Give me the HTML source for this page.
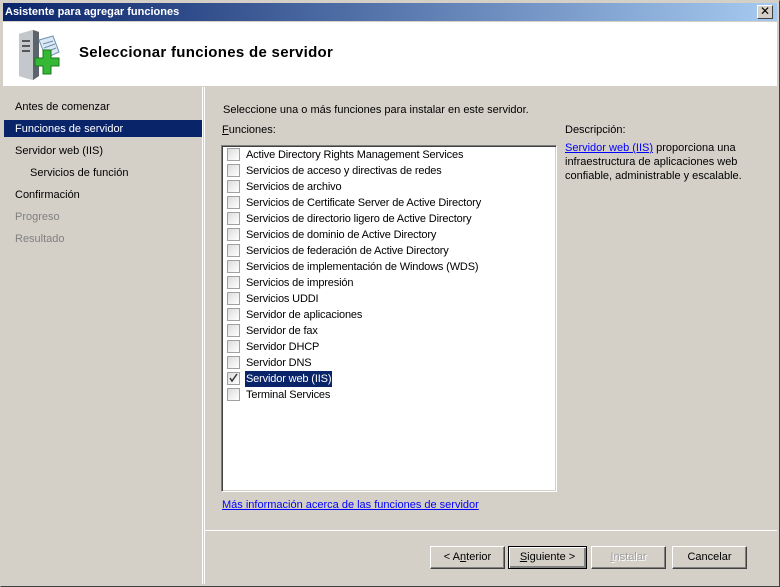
<!DOCTYPE html>
<html><head><meta charset="utf-8"><style>
*{margin:0;padding:0;box-sizing:border-box}
body{width:780px;height:587px;background:#d4d0c8;font-family:Tahoma,"Liberation Sans","DejaVu Sans",sans-serif;font-size:11px;color:#000;position:relative;overflow:hidden}
.abs{position:absolute}
#win{left:0;top:0;width:780px;height:587px;border:1px solid #d4d0c8;border-right-color:#404040;border-bottom-color:#404040}
#title{left:3px;top:3px;width:774px;height:18px;background:linear-gradient(90deg,#0a246a,#a6caf0);color:#fff;font-weight:bold;font-size:11px;line-height:18px;padding-left:2px}
#close{left:757px;top:5px;width:16px;height:14px;background:#d4d0c8;border:1px solid;border-color:#fff #404040 #404040 #fff;font-size:12px;line-height:11px;text-align:center;font-weight:bold;color:#000}
#head{left:3px;top:22px;width:774px;height:64px;background:#fff;border-bottom:1px solid #fff}
#head h1{position:absolute;left:76px;top:22px;font-size:15px;font-weight:bold;letter-spacing:0.3px}
#left{left:3px;top:87px;width:199px;height:497px;background:#d4d0c8}
#vl{left:202px;top:87px;width:3px;height:497px;border-left:1px solid #fff;border-right:1px solid #fff;background:#d4d0c8}
.nav{position:absolute;left:12px;height:17px;line-height:17px}
.sel{left:1px;width:201px;background:#0a246a;color:#fff;padding-left:11px}
.dis{color:#808080}
.lb{left:221px;top:145px;width:336px;height:347px;background:#fff;border:1px solid;border-color:#808080 #fff #fff #808080;box-shadow:inset 1px 1px 0 #404040,inset -1px -1px 0 #d4d0c8;letter-spacing:-0.15px}
.it{position:absolute;left:5px;height:16px;line-height:16px}
.cb{position:absolute;left:0;top:2px;width:13px;height:13px;border:1px solid #a0a0a0;background:linear-gradient(135deg,#dcdcdc,#fff)}
.tx{position:absolute;left:18px;top:1px;white-space:nowrap;padding:0 1px}
a{color:#0000ff;text-decoration:underline}
#bsep{left:205px;top:530px;width:572px;height:2px;border-top:1px solid #fff}
.btn{position:absolute;top:546px;width:75px;height:23px;border:1px solid;border-color:#fff #404040 #404040 #fff;box-shadow:inset -1px -1px 0 #808080;text-align:center;line-height:21px;background:#d4d0c8}
</style></head><body>
<div id="win" class="abs"></div>
<div id="title" class="abs">Asistente para agregar funciones</div>
<div id="close" class="abs">✕</div>
<div id="head" class="abs">
<svg style="position:absolute;left:10px;top:6px" width="50" height="54" viewBox="0 0 50 54">
<path d="M6 6 L20 2 L26 4 L26 48 L20 52 L6 48 Z" fill="#8a8f96"/>
<path d="M6 6 L20 2 L20 52 L6 48 Z" fill="#c4c8cd"/>
<path d="M20 2 L26 4 L26 48 L20 52Z" fill="#5d636b"/>
<rect x="9" y="12" width="8" height="2" fill="#555"/><rect x="9" y="17" width="8" height="2" fill="#555"/><rect x="9" y="22" width="8" height="2" fill="#555"/>
<path d="M26 12 L40 8 L46 24 L33 30 Z" fill="#dce8f3" stroke="#6a8fb0"/>
<path d="M30 16 L40 13 M31 20 L42 16 M33 24 L43 20" stroke="#6a8fb0"/>
<path d="M36 24 h8 v8 h8 v8 h-8 v8 h-8 v-8 h-8 v-8 h8z" transform="translate(-6,-2)" fill="#35b835" stroke="#1b7a1b"/>
</svg>
<h1>Seleccionar funciones de servidor</h1></div>
<div id="left" class="abs">
<div class="nav" style="top:12px">Antes de comenzar</div>
<div class="nav sel" style="top:33px;line-height:19px">Funciones de servidor</div>
<div class="nav" style="top:56px">Servidor web (IIS)</div>
<div class="nav" style="left:27px;top:78px">Servicios de función</div>
<div class="nav" style="top:100px">Confirmación</div>
<div class="nav dis" style="top:122px">Progreso</div>
<div class="nav dis" style="top:144px">Resultado</div>
</div>
<div id="vl" class="abs"></div>
<div class="abs" style="left:223px;top:104px">Seleccione una o más funciones para instalar en este servidor.</div>
<div class="abs" style="left:222px;top:124px"><u>F</u>unciones:</div>
<div class="abs lb">
<div class="it" style="top:0px"><span class="cb"></span><span class="tx">Active Directory Rights Management Services</span></div>
<div class="it" style="top:16px"><span class="cb"></span><span class="tx">Servicios de acceso y directivas de redes</span></div>
<div class="it" style="top:32px"><span class="cb"></span><span class="tx">Servicios de archivo</span></div>
<div class="it" style="top:48px"><span class="cb"></span><span class="tx">Servicios de Certificate Server de Active Directory</span></div>
<div class="it" style="top:64px"><span class="cb"></span><span class="tx">Servicios de directorio ligero de Active Directory</span></div>
<div class="it" style="top:80px"><span class="cb"></span><span class="tx">Servicios de dominio de Active Directory</span></div>
<div class="it" style="top:96px"><span class="cb"></span><span class="tx">Servicios de federación de Active Directory</span></div>
<div class="it" style="top:112px"><span class="cb"></span><span class="tx">Servicios de implementación de Windows (WDS)</span></div>
<div class="it" style="top:128px"><span class="cb"></span><span class="tx">Servicios de impresión</span></div>
<div class="it" style="top:144px"><span class="cb"></span><span class="tx">Servicios UDDI</span></div>
<div class="it" style="top:160px"><span class="cb"></span><span class="tx">Servidor de aplicaciones</span></div>
<div class="it" style="top:176px"><span class="cb"></span><span class="tx">Servidor de fax</span></div>
<div class="it" style="top:192px"><span class="cb"></span><span class="tx">Servidor DHCP</span></div>
<div class="it" style="top:208px"><span class="cb"></span><span class="tx">Servidor DNS</span></div>
<div class="it" style="top:224px"><span class="cb"><svg width="11" height="11" style="position:absolute;left:0;top:0"><path d="M2 5 L4 8 L9 1" stroke="#333" stroke-width="1.5" fill="none"/></svg></span><span class="tx" style="background:#0a246a;color:#fff">Servidor web (IIS)</span></div>
<div class="it" style="top:240px"><span class="cb"></span><span class="tx">Terminal Services</span></div>
</div>
<div class="abs" style="left:222px;top:499px"><a>Más información acerca de las funciones de servidor</a></div>
<div class="abs" style="left:565px;top:124px">Descripción:</div>
<div class="abs" style="left:565px;top:141px;width:212px;line-height:14px"><a>Servidor web (IIS)</a> proporciona una infraestructura de aplicaciones web confiable, administrable y escalable.</div>
<div id="bsep" class="abs"></div>
<div class="btn" style="left:430px">&lt; A<u>n</u>terior</div>
<div class="btn" style="left:508px;width:79px;border:1px solid #000;box-shadow:inset 1px 1px 0 #fff,inset -2px -2px 0 #808080"><u>S</u>iguiente &gt;</div>
<div class="btn" style="left:591px;color:#a0a0a0;text-shadow:1px 1px 0 #fff"><u>I</u>nstalar</div>
<div class="btn" style="left:672px">Cancelar</div>
</body></html>
